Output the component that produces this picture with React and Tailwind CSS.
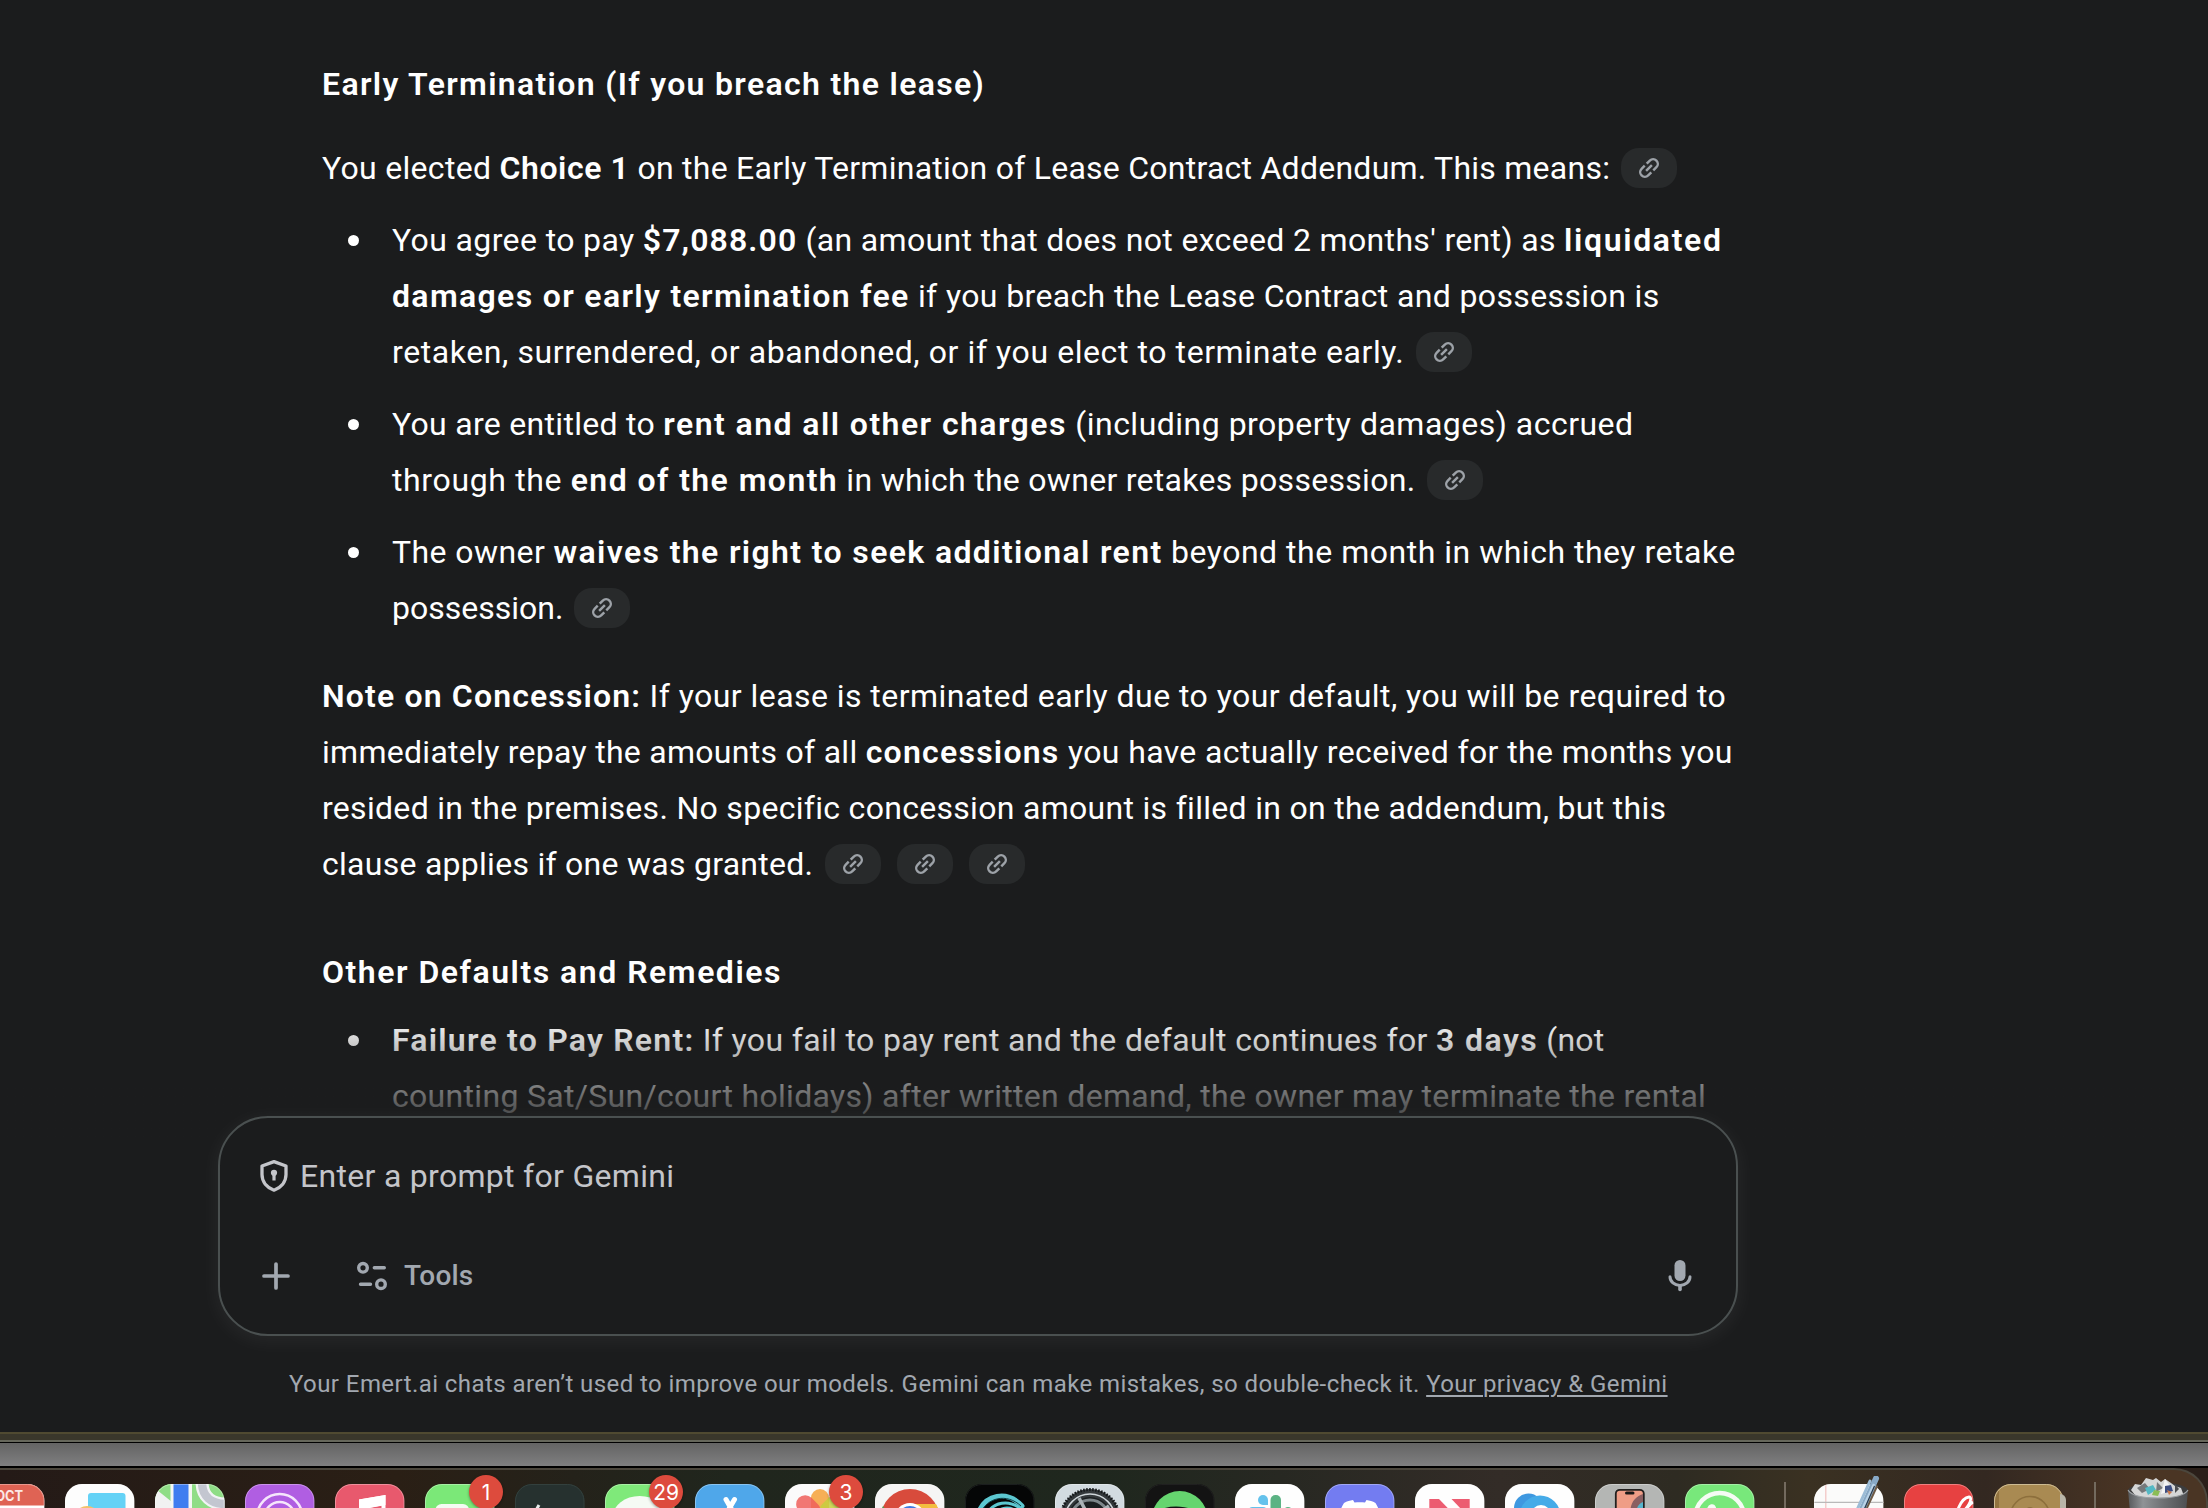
import React from "react";

function Line({ children }) {
  return <div className="flex h-14 items-center leading-[56px] whitespace-pre">{children}</div>;
}

function B({ t, children }) {
  return <strong className={`font-semibold ${t}`}>{children}</strong>;
}

function R({ t, children }) {
  return <span className={t}>{children}</span>;
}

function Chip({ m = "ml-[12px]" }) {
  return (
    <button className={`flex h-10 w-14 shrink-0 items-center justify-center rounded-[18px] bg-[#282a2b] text-[#9da2a8] ${m}`}>
      <svg className="size-7" viewBox="0 0 24 24" fill="none" stroke="currentColor" strokeWidth="2.1">
        <g transform="rotate(-45 12 12)">
          <path d="M13.2 8h3.8a4 4 0 0 1 0 8h-3.8M10.8 8H7a4 4 0 0 0 0 8h3.8M8.5 12h7" />
        </g>
      </svg>
    </button>
  );
}

function Bullet({ children }) {
  return (
    <li className="flex">
      <div className="flex h-14 w-[70px] shrink-0 items-center pl-[26px]">
        <span className="mt-px size-[11px] rounded-full bg-white" />
      </div>
      <div>{children}</div>
    </li>
  );
}

function Answer() {
  return (
    <article className="pt-14 pl-[322px] text-[32px] text-white">
      <h3><Line><B t="tracking-[1.33px]">Early Termination (If you breach the lease)</B></Line></h3>
      <div className="pt-7">
        <Line>
          <R t="tracking-[0.3px]">{"You elected "}</R>
          <B t="tracking-[0.55px]">Choice 1</B>
          <R t="tracking-[0.25px]">{" on the Early Termination of Lease Contract Addendum. This means:"}</R>
          <Chip m="ml-[11px]" />
        </Line>
      </div>
      <ul className="flex flex-col gap-4 pt-4">
        <Bullet>
          <Line>
            <R t="tracking-[0.38px]">{"You agree to pay "}</R>
            <B t="tracking-[1.09px]">$7,088.00</B>
            <R t="tracking-[0.34px]">{" (an amount that does not exceed 2 months' rent) as "}</R>
            <B t="tracking-[1.65px]">liquidated</B>
          </Line>
          <Line>
            <B t="tracking-[1.34px]">damages or early termination fee</B>
            <R t="tracking-[0.37px]">{" if you breach the Lease Contract and possession is"}</R>
          </Line>
          <Line>
            <R t="tracking-[0.58px]">retaken, surrendered, or abandoned, or if you elect to terminate early.</R>
            <Chip />
          </Line>
        </Bullet>
        <Bullet>
          <Line>
            <R t="tracking-[0.3px]">{"You are entitled to "}</R>
            <B t="tracking-[1.44px]">rent and all other charges</B>
            <R t="tracking-[0.49px]">{" (including property damages) accrued"}</R>
          </Line>
          <Line>
            <R t="tracking-[0.64px]">{"through the "}</R>
            <B t="tracking-[1.42px]">end of the month</B>
            <R t="tracking-[0.29px]">{" in which the owner retakes possession."}</R>
            <Chip />
          </Line>
        </Bullet>
        <Bullet>
          <Line>
            <R t="tracking-[0.42px]">{"The owner "}</R>
            <B t="tracking-[1.37px]">waives the right to seek additional rent</B>
            <R t="tracking-[0.51px]">{" beyond the month in which they retake"}</R>
          </Line>
          <Line>
            <R t="tracking-[0px]">possession.</R>
            <Chip m="ml-[11px]" />
          </Line>
        </Bullet>
      </ul>
      <div className="pt-8">
        <Line>
          <B t="tracking-[1.15px]">Note on Concession:</B>
          <R t="tracking-[0.445px]">{" If your lease is terminated early due to your default, you will be required to"}</R>
        </Line>
        <Line>
          <R t="tracking-[0.28px]">{"immediately repay the amounts of all "}</R>
          <B t="tracking-[1.24px]">concessions</B>
          <R t="tracking-[0.38px]">{" you have actually received for the months you"}</R>
        </Line>
        <Line><R t="tracking-[0.3px]">resided in the premises. No specific concession amount is filled in on the addendum, but this</R></Line>
        <Line>
          <R t="tracking-[0.27px]">clause applies if one was granted.</R>
          <Chip m="ml-[12px]" />
          <Chip m="ml-4" />
          <Chip m="ml-4" />
        </Line>
      </div>
      <h3 className="pt-[52px]"><Line><B t="tracking-[1.52px]">Other Defaults and Remedies</B></Line></h3>
      <ul className="pt-3">
        <Bullet>
          <Line>
            <B t="tracking-[1.24px]">Failure to Pay Rent:</B>
            <R t="tracking-[0.36px]">{" If you fail to pay rent and the default continues for "}</R>
            <B t="tracking-[1.4px]">3 days</B>
            <R t="tracking-[0.25px]">{" (not"}</R>
          </Line>
          <Line><R t="tracking-[0.31px]">counting Sat/Sun/court holidays) after written demand, the owner may terminate the rental</R></Line>
        </Bullet>
      </ul>
    </article>
  );
}

function PromptBox() {
  return (
    <section className="relative mx-[218px] -mt-2 flex h-[220px] w-[1520px] flex-col rounded-[50px] border-2 border-[#4a5050] bg-[#1b1c1d] shadow-[0_4px_20px_2px_rgba(255,255,255,0.05)]">
      <div className="flex items-center pt-[30px] pl-[39px] text-[#c4c5ca]">
        <svg className="h-[34px] w-[30px]" viewBox="0 0 30 34" fill="none" stroke="currentColor">
          <path d="M15 2.6 27 7v8.6c0 7.2-4.8 13-12 15.6C7.8 28.6 3 22.8 3 15.6V7z" strokeWidth="3.3" strokeLinejoin="round" />
          <circle cx="15" cy="13.8" r="3.1" fill="currentColor" stroke="none" />
          <path d="M15 14v7.5" strokeWidth="3.2" />
        </svg>
        <span className="ml-[11px] text-[32px] leading-[56px] tracking-[0.3px]">Enter a prompt for Gemini</span>
      </div>
      <div className="flex items-center pt-[52px] pl-[42px] text-[#a2a8b0]">
        <svg className="size-7" viewBox="0 0 28 28" fill="none" stroke="currentColor" strokeWidth="3.7" strokeLinecap="round">
          <path d="M14 2v24M2 14h24" />
        </svg>
        <svg className="ml-[66px] h-[30px] w-8" viewBox="0 0 32 30" fill="none" stroke="currentColor" strokeWidth="3.4" strokeLinecap="round">
          <circle cx="7" cy="6.8" r="4.3" />
          <path d="M18.3 6.8h10M4.5 23.2h10" />
          <circle cx="25" cy="23.2" r="4.3" />
        </svg>
        <span className="ml-[16px] text-[28px] leading-10 font-medium tracking-[0.2px]">Tools</span>
        <svg className="ml-auto mr-[44px] h-8 w-6" viewBox="0 0 24 32" fill="none" stroke="currentColor">
          <rect x="6.5" y="0" width="11" height="21" rx="5.5" fill="currentColor" stroke="none" />
          <path d="M2 16.8a10 8.6 0 0 0 20 0" strokeWidth="3" strokeLinecap="round" />
          <path d="M12 26v3.500" strokeWidth="3.600" strokeLinecap="round" />
        </svg>
      </div>
    </section>
  );
}

/* ---------- Dock ---------- */

function Tile({ bg, children, light = "#ffffff55" }) {
  const id = React.useId();
  return (
    <svg className="size-[69.5px] shrink-0 overflow-visible" viewBox="0 0 69.5 69.5">
      <defs>
        <clipPath id={id}><rect width="69.5" height="69.5" rx="17" /></clipPath>
      </defs>
      <g clipPath={`url(#${id})`}>
        <rect width="69.5" height="69.5" fill={bg} />
        {children}
      </g>
      <rect x=".5" y=".5" width="68.5" height="68.5" rx="16.5" fill="none" stroke={light} />
    </svg>
  );
}

function Badge({ n, children }) {
  return (
    <div className="relative shrink-0">
      {children}
      <span className="absolute -top-[9px] left-[44.5px] flex size-[34px] items-center justify-center rounded-full bg-[#dd4b3d] font-['Inter'] text-[21px] leading-none text-white shadow-[0_1px_3px_rgba(0,0,0,0.4)]">{n}</span>
    </div>
  );
}

function Separator() {
  return <span className="-mt-0.5 h-[72px] w-0.5 shrink-0 bg-[#736a5e]" />;
}

function Calendar() {
  return (
    <Tile bg="#fff">
      <rect width="69.5" height="21.5" fill="#df6354" />
      <text x="34.2" y="17.3" textAnchor="middle" fontFamily="Inter" fontWeight="700" fontSize="14" textLength="28" lengthAdjust="spacingAndGlyphs" fill="#fbe9e6">OCT</text>
    </Tile>
  );
}

function Maps() {
  return (
    <Tile bg="#8fdd86">
      <path d="M0 0 17 17v52H0z" fill="#f1f2f2" />
      <path d="M0 0h17v18L2 6z" fill="#8fdd86" />
      <rect x="15.5" width="21.5" height="70" fill="#f4f6f4" />
      <rect x="18.5" width="15" height="70" fill="#3f7df0" />
      <path d="M47 -2c0 14 9 22 24 22" fill="none" stroke="#f2f3f5" strokeWidth="13" />
      <path d="M47 -2c0 14 9 22 24 22" fill="none" stroke="#c3c6d0" strokeWidth="8.5" />
    </Tile>
  );
}

function Photos() {
  const petals = [["#f4a13a", 0], ["#c5cf3d", 45], ["#7cc36b", 90], ["#5fb8a8", 135], ["#6aa0e0", 180], ["#a07ad0", 225], ["#d770a8", 270], ["#ef5f5a", 315]];
  return (
    <Tile bg="#fbfbfb">
      {petals.map(([c, a]) => (
        <rect key={a} x="26" y="5" width="18" height="27" rx="9" fill={c} opacity=".85" transform={`rotate(${a} 35 35)`} />
      ))}
    </Tile>
  );
}

function Settings() {
  return (
    <Tile bg="#d2dbe0">
      <circle cx="35" cy="35" r="30" fill="#33383b" />
      <circle cx="35" cy="35" r="29.5" fill="none" stroke="#15181a" strokeWidth="3" strokeDasharray="1.5 1.5" />
      <circle cx="35" cy="35" r="25" fill="none" stroke="#cfd6da" strokeWidth="1.6" />
      <circle cx="35" cy="35" r="22" fill="#1b1f21" />
      <circle cx="35" cy="35" r="19" fill="none" stroke="#7d868a" strokeWidth="3" />
      <path d="M35 35 24 14M35 35 54 22M35 35H12" stroke="#aab2b6" strokeWidth="3.5" />
      <circle cx="35" cy="35" r="11" fill="#4a5053" />
    </Tile>
  );
}

function Chrome() {
  return (
    <Tile bg="#f5f5f4">
      <circle cx="35" cy="34.5" r="29.5" fill="#d84b3c" />
      <path d="M35 20h26a29.5 29.5 0 0 1-26 44z" fill="#f3bd3f" />
      <path d="M8 22a29.5 29.5 0 0 0 27 42L22 40z" fill="#3fa455" />
      <circle cx="35" cy="34.5" r="15.500" fill="#fff" />
      <circle cx="35" cy="34.5" r="12.500" fill="#3f78e0" />
    </Tile>
  );
}

function TextEdit() {
  return (
    <div className="relative shrink-0">
      <Tile bg="#fbfbfa">
        <path d="M11.8 0v70" stroke="#f3c3c1" strokeWidth="1.2" />
        <path d="M0 18.3h70" stroke="#b9b9b9" strokeWidth="1.2" />
      </Tile>
      <svg className="absolute -top-2 left-[40px] h-10 w-7" viewBox="0 0 28 40">
        <path d="M18 6 4 36" stroke="#6e5a45" strokeWidth="5" transform="translate(4 3)" />
        <path d="M22 2.5 6 38" stroke="#88a9c6" strokeWidth="6" strokeLinecap="round" />
        <path d="M20 8 6 38" stroke="#b9d3e8" strokeWidth="2.4" />
        <path d="M16 5 3 34" stroke="#9cbcd6" strokeWidth="3" strokeLinecap="round" />
        <path d="M20.5 10 10 34" stroke="#2c3a48" strokeWidth="1.2" />
      </svg>
    </div>
  );
}

function Notebook() {
  return (
    <div className="relative shrink-0">
      <span className="absolute top-2.5 left-[66px] h-14 w-[6px] rounded-r-md bg-[#b9b5a8]" />
      <Tile bg="#a98a52" light="#cdbb93">
        <rect width="5" height="70" fill="#92733f" />
        <circle cx="36" cy="32" r="19.5" fill="none" stroke="#8d6f3c" strokeWidth="1.6" />
        <circle cx="36" cy="28" r="5" fill="#8d6f3c" />
      </Tile>
    </div>
  );
}

function Trash() {
  return (
    <svg className="-mt-2 ml-[-0.5px] h-[80px] w-[62px] shrink-0" viewBox="0 0 62 80">
      <defs>
        <linearGradient id="bin">
          <stop offset="0" stopColor="#55585b" />
          <stop offset=".25" stopColor="#8f9396" />
          <stop offset=".6" stopColor="#6d7073" />
          <stop offset="1" stopColor="#4c4e50" />
        </linearGradient>
      </defs>
      <ellipse cx="31" cy="14.5" rx="30" ry="8" fill="#3b3c3d" />
      <path d="m4 14 4-6 6 1 5-7 7 2 3-2 5 4 4-3 6 4 4 3 6 2 3 8-8 4H12z" fill="#d5d6d6" />
      <path d="m10 12 8-5 5 6-8 4zM30 6l6 6-7 4z" fill="#77797b" />
      <path d="m18 12 8-3 3 5-8 5z" fill="#54b8c4" />
      <path d="m38 3 8 11-12 4z" fill="#f3f3f3" />
      <path d="m38 10 6-1 2 6-8 2z" fill="#3c4d80" />
      <path d="m27 14 6 1-2 5-6-1z" fill="#8bbd55" />
      <path d="m40 14 5 2-3 3z" fill="#c8774a" />
      <path d="m48 8 4 5-4 4z" fill="#4b4c4e" />
      <path d="M1 14c3 5 14 8 30 8s27-3 30-8l-6 66H7z" fill="url(#bin)" />
      <path d="M1 14c3 5 14 8 30 8s27-3 30-8" fill="none" stroke="#9ea2a5" strokeWidth="1.2" />
    </svg>
  );
}

function Dock() {
  return (
    <footer className="h-10 overflow-hidden bg-[#2a1f19]">
      <div className="h-24 w-[2208px] overflow-hidden rounded-tr-[34px] border-t-2 border-r-2 border-[#4b463c] bg-[linear-gradient(90deg,#241a17_0%,#2a1f15_18%,#24221a_26%,#20261d_33%,#1f271e_50%,#272822_58%,#332c27_68%,#2e2b22_76%,#3a3122_82%,#332821_90%,#4a3524_97%)]">
        <div className="-ml-[25.4px] flex gap-[20.5px] pt-3.5">
          <Calendar />
          <Tile bg="#fdfdfd">
            <rect x="23" y="9" width="37.5" height="34" rx="3" fill="#64d2f6" />
            <circle cx="22" cy="35" r="13" fill="#f3c26a" />
          </Tile>
          <Maps />
          <Tile bg="#b05ee2">
            <g fill="none" stroke="#f5e6fc" strokeWidth="2.6">
              <circle cx="34.7" cy="32.5" r="22.5" />
              <circle cx="34.7" cy="33" r="15" />
            </g>
          </Tile>
          <Tile bg="#e8596d">
            <path d="M24 15.5 50.5 11v34h-4V21.5L28 25v24h-4z" fill="#fff" />
            <path d="M24 15.5 50.5 11v10L24 26z" fill="#fff" />
          </Tile>
          <Badge n="1">
            <Tile bg="#7be878"><rect x="10.5" y="20" width="33.5" height="30" rx="6" fill="#f4fbf3" /></Tile>
          </Badge>
          <Tile bg="#26312f" light="#33403d">
            <path d="m24 21-8 14" stroke="#e8ecec" strokeWidth="3" />
          </Tile>
          <Badge n="29">
            <Tile bg="#7fe97a"><ellipse cx="34.7" cy="33" rx="27" ry="21" fill="#f5faf4" /></Tile>
          </Badge>
          <Tile bg="#4fa7ea">
            <path d="m31 15.5 13 23M39.5 15.5 26 38.5" stroke="#fff" strokeWidth="5" strokeLinecap="round" />
          </Tile>
          <Badge n="3"><Photos /></Badge>
          <Chrome />
          <Tile bg="#050606" light="#1b1e1e">
            <g fill="none" stroke="#5cc7d0" strokeLinecap="round">
              <path d="M13 30C20 10 42 6 57 22" strokeWidth="5" />
              <path d="M22 30c6-12 22-15 34-5" strokeWidth="3" />
              <path d="M30 30c5-7 14-8 22-3" strokeWidth="2.5" />
            </g>
            <path d="M15 30C22 13 42 9 56 22" fill="none" stroke="#0c3a40" strokeWidth="1" />
          </Tile>
          <Settings />
          <Tile bg="#131313" light="#202020">
            <circle cx="34.7" cy="35" r="28" fill="#65d56f" />
            <path d="M17 27.5c11-4 25-3 36 3" fill="none" stroke="#131313" strokeWidth="5" strokeLinecap="round" />
          </Tile>
          <Tile bg="#fefefe">
            <path d="M23 16a5 5 0 0 1 10 0v5h-5a5 5 0 0 1-5-5z" fill="#64c2ec" />
            <rect x="12.5" y="23" width="20.5" height="10" rx="5" fill="#64c2ec" />
            <rect x="35.5" y="11" width="10.5" height="22" rx="5" fill="#5bb384" />
            <rect x="48" y="23" width="10" height="10" rx="5" fill="#5bb384" />
          </Tile>
          <Tile bg="#737cf1">
            <path d="M19 19c3-2 6-2.5 9-3l1.5 2.5c3.5-.5 7-.5 10.5 0L41.5 16c3 .5 6 1 9 3 4 6 6 14 6 24H13c0-10 2-18 6-24z" fill="#fff" />
          </Tile>
          <Tile bg="#fefefe">
            <path d="M14.3 15H24l31 32v8H44L14.3 25z" fill="#ec5c71" />
            <path d="M36.5 15h18.2v19z" fill="#ec5c71" />
          </Tile>
          <Tile bg="#fefefe">
            <circle cx="23.5" cy="24" r="14.5" fill="#3e98e0" />
            <circle cx="35" cy="32" r="20.5" fill="#45abe8" />
            <circle cx="36" cy="31" r="10" fill="#fff" />
          </Tile>
          <Tile bg="#b4b6b4">
            <rect x="20.8" y="5.8" width="28" height="60" rx="4" fill="#ef9d86" stroke="#22201f" strokeWidth="1.8" />
            <path d="M48 10c-9 3-14 11-12 20h12z" fill="#8a5f62" />
            <path d="M48 18c-5 2-7 6-6 12h6z" fill="#56b4cd" />
            <rect x="30" y="7.5" width="9.5" height="3" rx="1.5" fill="#1a1818" />
          </Tile>
          <Tile bg="#78e87b">
            <circle cx="34.7" cy="33.5" r="24.5" fill="none" stroke="#f5fbf5" strokeWidth="4.5" />
            <path d="M24 25c1-3 4-4 5-1l1 4" fill="none" stroke="#f5fbf5" strokeWidth="4" />
          </Tile>
          <div className="ml-[9px] flex gap-[28.5px]">
            <Separator />
            <TextEdit />
          </div>
          <Tile bg="#e74141">
            <path d="M53 40c-3-10 4-26 12-27 5 0-2 14-9 15M60 38c-1-8 3-16 9-20" fill="none" stroke="#fff" strokeWidth="2.8" />
          </Tile>
          <Notebook />
          <div className="ml-[9.5px] flex gap-8">
            <Separator />
            <Trash />
          </div>
        </div>
      </div>
    </footer>
  );
}

export default function App() {
  return (
    <div className="h-[1508px] w-[2208px] overflow-hidden bg-black font-['Roboto',sans-serif]">
      <main className="relative h-[1432px] overflow-hidden bg-[#1b1c1d]">
        <Answer />
        <div className="pointer-events-none absolute inset-x-0 top-[1016px] h-[124px] bg-linear-to-b from-[#1b1c1d]/0 to-[#1b1c1d]" />
        <PromptBox />
        <p className="pt-[30px] pl-[289px] text-2xl leading-9 whitespace-pre text-[#a2a8b0]">
          <span className="tracking-[0.43px]">{"Your Emert.ai chats aren’t used to improve our models. Gemini can make mistakes, so double-check it. "}</span>
          <a className="tracking-[0.43px] underline decoration-2 underline-offset-[3px]">Your privacy &amp; Gemini</a>
        </p>
      </main>
      <div className="h-2.5 border-t-2 border-b-2 border-t-[#504a31] border-b-[#66675b] bg-[#3a372b]" />
      <div className="mt-px h-[23px] bg-linear-to-b from-[#646464] to-[#7f7f80]" />
      <div className="mt-0.5"><Dock /></div>
    </div>
  );
}
